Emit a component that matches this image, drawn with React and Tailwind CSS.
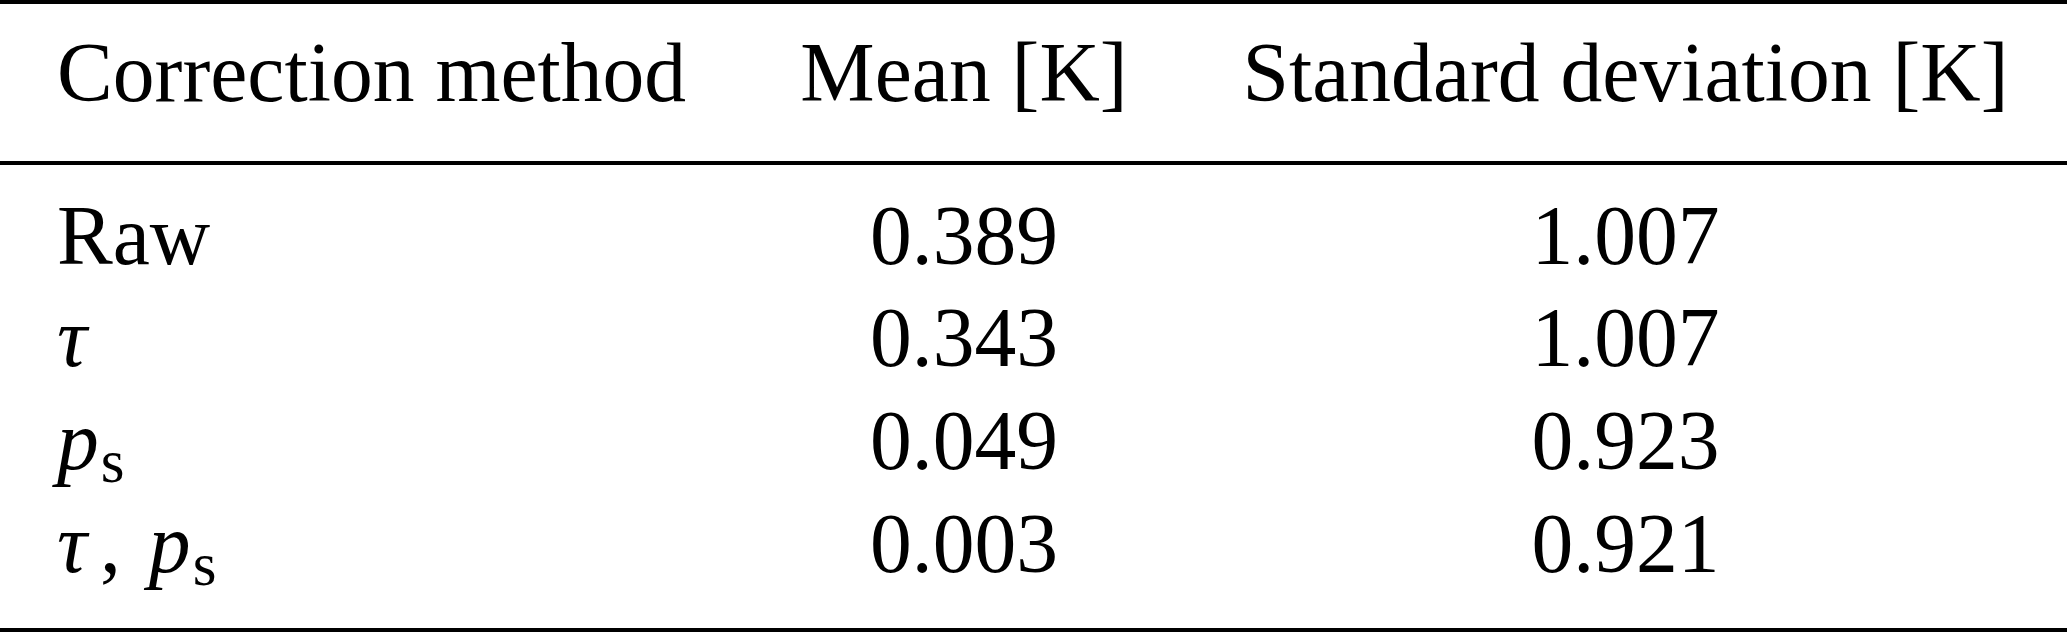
const rows = [
  { label: "raw", mean: "0.389", sd: "1.007" },
  { label: "tau", mean: "0.343", sd: "1.007" },
  { label: "ps", mean: "0.049", sd: "0.923" },
  { label: "tau-ps", mean: "0.003", sd: "0.921" },
];

const Ps = () => (
  <span>
    <span className="italic">p</span>
    <span className="relative top-[13px] ml-[2px] text-[61px]">s</span>
  </span>
);

const Label = ({ kind }) => {
  if (kind === "raw") return <span>Raw</span>;
  if (kind === "tau") return <span className="italic">τ</span>;
  if (kind === "ps") return <Ps />;
  return (
    <span>
      <span className="italic">τ</span>
      <span className="ml-[13px] mr-[28px]">,</span>
      <Ps />
    </span>
  );
};

export default function App() {
  return (
    <div className="w-[2067px] h-[632px] bg-white text-black font-['Liberation_Serif',serif] text-[83.6px]">
      <div className="border-t-4 border-b-4 border-black pt-[28px] pb-[45px]">
        <div className="grid grid-cols-[744px_440px_1fr] leading-none whitespace-nowrap">
          <div className="pl-[57px]">Correction method</div>
          <div className="text-center">Mean [K]</div>
          <div className="text-center">Standard deviation [K]</div>
        </div>
      </div>
      <div className="border-b-4 border-black pt-[20px] pb-[33px]">
        {rows.map((r) => (
          <div
            key={r.label}
            className="grid grid-cols-[744px_440px_1fr] leading-[102.7px] h-[102.7px] whitespace-nowrap"
          >
            <div className="pl-[57px]">
              <Label kind={r.label} />
            </div>
            <div className="text-center">{r.mean}</div>
            <div className="text-center">{r.sd}</div>
          </div>
        ))}
      </div>
    </div>
  );
}
